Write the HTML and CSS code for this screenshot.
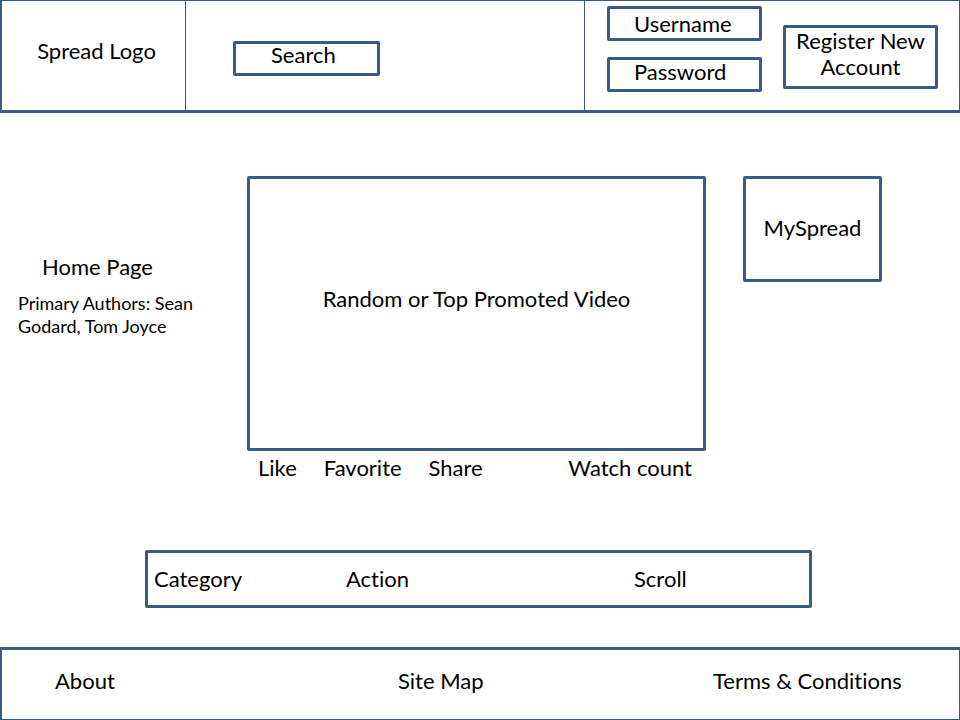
FILE: index.html
```html
<!DOCTYPE html>
<html lang="en">
<head>
<meta charset="utf-8">
<meta name="viewport" content="width=device-width, initial-scale=1">
<title>Spread</title>
<link rel="stylesheet" href="styles.css">
</head>
<body>
<header class="top">
  <div class="top-cell brand"><a href="#">Spread Logo</a></div>
  <form class="top-cell search" role="search">
    <input class="box field" type="search" aria-label="Search" placeholder="Search">
  </form>
  <form class="top-cell account">
    <div class="login">
      <input class="box field username" type="text" aria-label="Username" placeholder="Username">
      <input class="box field" type="password" aria-label="Password" placeholder="Password">
    </div>
    <button class="box register" type="button">Register New Account</button>
  </form>
</header>
<main>
  <div class="content">
    <section class="intro">
      <h1>Home Page</h1>
      <p>Primary Authors: Sean Godard, Tom Joyce</p>
    </section>
    <section class="player">
      <div class="box video">Random or Top Promoted Video</div>
      <div class="actions">
        <button type="button">Like</button>
        <button type="button">Favorite</button>
        <button type="button">Share</button>
        <span class="count">Watch count</span>
      </div>
    </section>
    <a class="box myspread" href="#">MySpread</a>
  </div>
  <nav class="box browse" aria-label="Browse">
    <a href="#">Category</a>
    <a href="#">Action</a>
    <a href="#">Scroll</a>
  </nav>
</main>
<footer class="bottom">
  <a href="#">About</a>
  <a href="#">Site Map</a>
  <a href="#">Terms &amp; Conditions</a>
</footer>
</body>
</html>
```
FILE: styles.css
```css
:root {
  --line: #3b5b84;
}

* {
  box-sizing: border-box;
}

body {
  margin: 0;
  min-height: 100vh;
  display: flex;
  flex-direction: column;
  background: #fff;
  color: #000;
  font: 22px/28px Lato, Carlito, Calibri, sans-serif;
  font-variant-ligatures: none;
}

a {
  color: inherit;
  text-decoration: none;
}

button,
input {
  margin: 0;
  padding: 0;
  border: 0;
  background: none;
  color: inherit;
  font: inherit;
  font-variant-ligatures: none;
}

.box {
  border: 3px solid var(--line);
  border-radius: 2px;
}

.top {
  display: grid;
  grid-template-columns: 183fr 399fr 375fr;
  min-height: 113px;
  border: solid var(--line);
  border-width: 1px 1px 3px 2px;
}

.top-cell {
  display: flex;
  align-items: flex-start;
}

.top-cell + .top-cell {
  border-left: 1px solid var(--line);
}

.brand {
  justify-content: center;
  padding: 36px 0 0 6px;
}

.search {
  padding: 40px 48px 0 47px;
}

.field {
  width: 100%;
  height: 35px;
  padding: 0 0 6px 24px;
  appearance: none;
}

.search .field {
  max-width: 147px;
  padding: 0 0 8px 35px;
}

.field.username {
  padding-bottom: 0;
}

.field::placeholder {
  color: #000;
  opacity: 1;
}

.top-cell.account {
  display: grid;
  grid-template-columns: 1fr 1fr;
  gap: 21px;
  padding: 5px 21px 0 22px;
}

.login {
  display: flex;
  flex-direction: column;
  gap: 16px;
}

.register {
  margin-top: 19px;
  padding-bottom: 6px;
  line-height: 26px;
}

.content {
  display: grid;
  grid-template-columns: 247fr 459fr 254fr;
  align-items: start;
  padding-top: 63px;
}

.intro {
  padding: 77px 32px 0 18px;
}

.intro h1 {
  margin: 0 0 11px 24px;
  font: inherit;
}

.intro p {
  margin: 0;
  font-size: 18px;
  line-height: 23px;
}

.video {
  display: flex;
  align-items: center;
  justify-content: center;
  aspect-ratio: 459 / 275;
  padding-bottom: 30px;
}

.actions {
  display: flex;
  gap: 27px;
  padding: 3px 14px 0 11px;
}

.count {
  margin-left: auto;
}

.myspread {
  display: flex;
  align-items: center;
  justify-content: center;
  height: 106px;
  margin: 0 78px 0 37px;
  padding-bottom: 2px;
}

.browse {
  display: grid;
  grid-template-columns: 192fr 288fr 175fr;
  margin: 68px 148px 39px 145px;
  padding: 12px 0 12px 6px;
}

.bottom {
  display: grid;
  grid-template-columns: 343fr 315fr 246fr;
  margin-top: auto;
  padding: 17px 0 24px 53px;
  border: solid var(--line);
  border-width: 3px 1px 1px 2px;
}
```
